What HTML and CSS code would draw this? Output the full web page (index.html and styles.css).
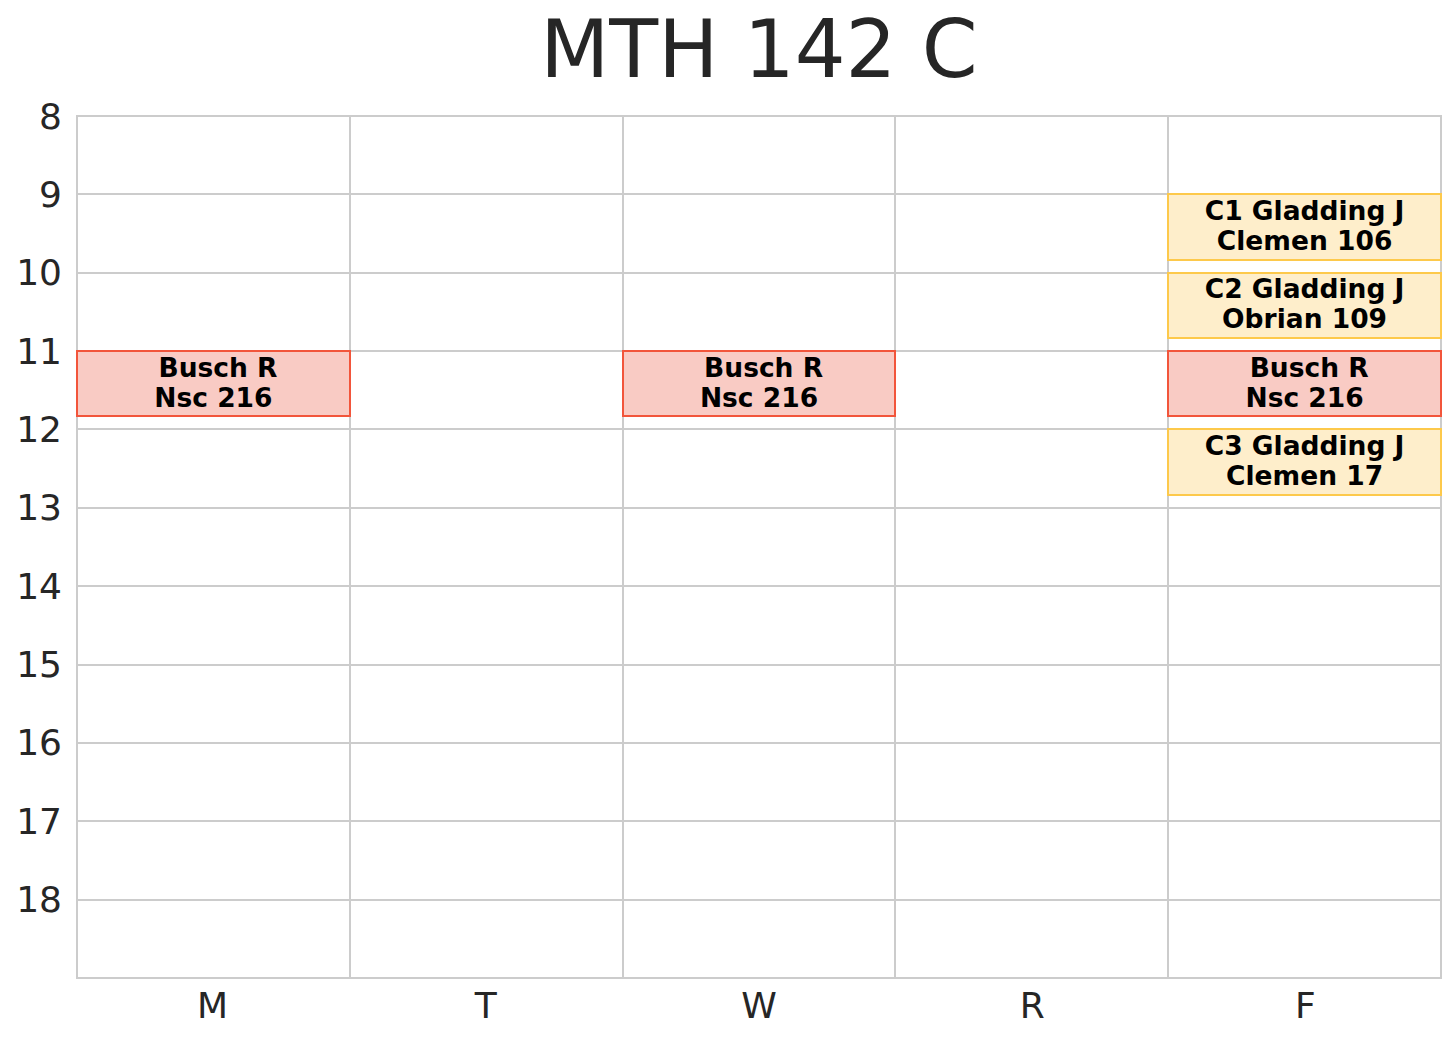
FILE: index.html
```html
<!DOCTYPE html>
<html>
<head>
<meta charset="utf-8">
<link rel="stylesheet" href="styles.css">
</head>
<body>
<div class="chart">
  <div class="title">MTH 142 C</div>
  <div class="main">
    <div class="yaxis">
      <div class="ytick">8</div>
      <div class="ytick">9</div>
      <div class="ytick">10</div>
      <div class="ytick">11</div>
      <div class="ytick">12</div>
      <div class="ytick">13</div>
      <div class="ytick">14</div>
      <div class="ytick">15</div>
      <div class="ytick">16</div>
      <div class="ytick">17</div>
      <div class="ytick">18</div>
    </div>
    <div class="plot">
      <div class="day">
        <div class="hour"></div><div class="hour"></div><div class="hour"></div><div class="hour"></div><div class="hour"></div><div class="hour"></div><div class="hour"></div><div class="hour"></div><div class="hour"></div><div class="hour"></div><div class="hour"></div>
        <div class="event lecture" style="--s:3; --d:0.8333"><span class="label"> Busch R
Nsc 216</span></div>
      </div>
      <div class="day">
        <div class="hour"></div><div class="hour"></div><div class="hour"></div><div class="hour"></div><div class="hour"></div><div class="hour"></div><div class="hour"></div><div class="hour"></div><div class="hour"></div><div class="hour"></div><div class="hour"></div>
      </div>
      <div class="day">
        <div class="hour"></div><div class="hour"></div><div class="hour"></div><div class="hour"></div><div class="hour"></div><div class="hour"></div><div class="hour"></div><div class="hour"></div><div class="hour"></div><div class="hour"></div><div class="hour"></div>
        <div class="event lecture" style="--s:3; --d:0.8333"><span class="label"> Busch R
Nsc 216</span></div>
      </div>
      <div class="day">
        <div class="hour"></div><div class="hour"></div><div class="hour"></div><div class="hour"></div><div class="hour"></div><div class="hour"></div><div class="hour"></div><div class="hour"></div><div class="hour"></div><div class="hour"></div><div class="hour"></div>
      </div>
      <div class="day">
        <div class="hour"></div><div class="hour"></div><div class="hour"></div><div class="hour"></div><div class="hour"></div><div class="hour"></div><div class="hour"></div><div class="hour"></div><div class="hour"></div><div class="hour"></div><div class="hour"></div>
        <div class="event section" style="--s:1; --d:0.8333"><span class="label">C1 Gladding J
Clemen 106</span></div>
        <div class="event section" style="--s:2; --d:0.8333"><span class="label">C2 Gladding J
Obrian 109</span></div>
        <div class="event lecture" style="--s:3; --d:0.8333"><span class="label"> Busch R
Nsc 216</span></div>
        <div class="event section" style="--s:4; --d:0.8333"><span class="label">C3 Gladding J
Clemen 17</span></div>
      </div>
    </div>
  </div>
  <div class="xaxis">
    <div class="xtick">M</div>
    <div class="xtick">T</div>
    <div class="xtick">W</div>
    <div class="xtick">R</div>
    <div class="xtick">F</div>
  </div>
</div>
</body>
</html>
```

FILE: styles.css
```css
html, body {
  margin: 0;
  padding: 0;
  background: #ffffff;
}

.chart {
  width: 1456px;
  height: 1040px;
  padding-top: 9px;
  box-sizing: border-box;
  display: flex;
  flex-direction: column;
  font-family: "DejaVu Sans", "Liberation Sans", sans-serif;
  color: #262626;
}

.title {
  margin-left: 76px;
  width: 1366px;
  height: 82px;
  margin-bottom: 24px;
  text-align: center;
  font-size: 80px;
  line-height: 82px;
}

.main {
  display: flex;
}

.yaxis {
  width: 76px;
  margin-top: -16.5px;
  display: flex;
  flex-direction: column;
}

.ytick {
  height: 78.36px;
  flex: none;
  line-height: 36px;
  font-size: 36px;
  text-align: right;
  padding-right: 14px;
}

.plot {
  width: 1366px;
  height: 864px;
  box-sizing: border-box;
  border: 2px solid #cccccc;
  background: #cccccc;
  display: grid;
  grid-template-columns: repeat(5, 1fr);
  gap: 2px;
}

.day {
  position: relative;
  display: flex;
  flex-direction: column;
  gap: 2px;
}

.hour {
  flex: 1;
  background: #ffffff;
}

.event {
  position: absolute;
  left: -2px;
  width: calc(100% + 4px);
  top: calc((100% + 2px) / 11 * var(--s) - 2px);
  height: calc((100% + 2px) / 11 * var(--d) + 2px);
  box-sizing: border-box;
  border: 2px solid;
  display: flex;
  align-items: center;
  justify-content: center;
}

.lecture {
  background: #f9cbc4;
  border-color: #f2553b;
}

.section {
  background: #feeecb;
  border-color: #fdc94b;
}

.label {
  white-space: pre;
  text-align: center;
  font-weight: bold;
  font-size: 26.5px;
  line-height: 30px;
  color: #000000;
  margin-top: -2px;
}

.xaxis {
  margin-left: 76px;
  width: 1366px;
  margin-top: 9px;
  display: grid;
  grid-template-columns: repeat(5, 1fr);
}

.xtick {
  text-align: center;
  font-size: 36px;
  line-height: 36px;
}
```
